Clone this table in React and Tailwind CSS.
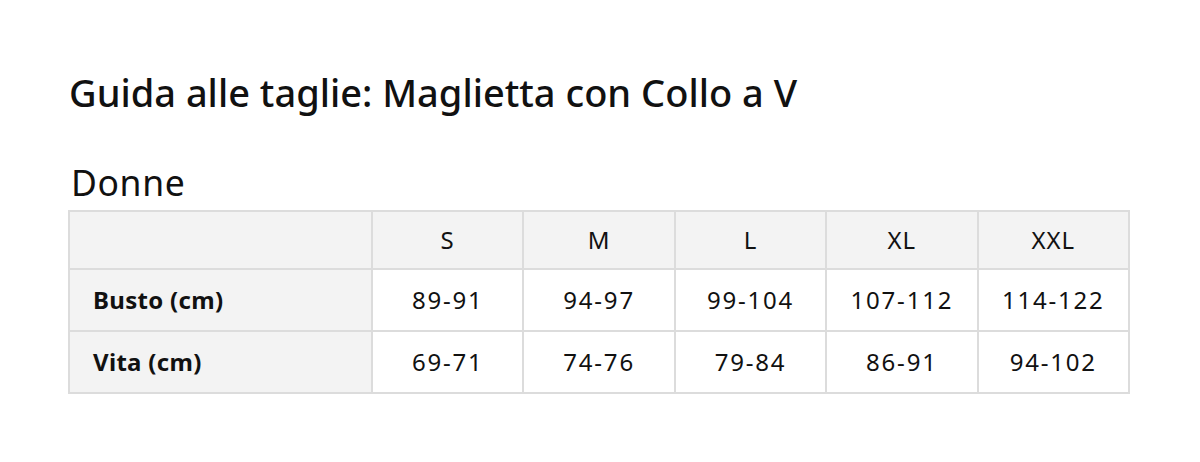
import React from "react";

const sizes = ["S", "M", "L", "XL", "XXL"];

const rows = [
  { label: "Busto (cm)", values: ["89-91", "94-97", "99-104", "107-112", "114-122"] },
  { label: "Vita (cm)", values: ["69-71", "74-76", "79-84", "86-91", "94-102"] },
];

export default function App() {
  return (
    <div
      className="w-[1200px] h-[462px] bg-white text-[#111] pl-[68px] pt-[66px]"
      style={{ fontFamily: '"Noto Sans", "Open Sans", sans-serif' }}
    >
      <h1 className="text-[38px] font-medium leading-[52px] pl-[1px]">
        Guida alle taglie: Maglietta con Collo a V
      </h1>

      <h2 className="text-[35.5px] leading-[44px] mt-[42px] pl-[3px] tracking-[0.6px]">Donne</h2>

      <table className="table-fixed mt-[6px] w-[1062px] border-collapse border-2 border-[#dcdcdc] text-[24px]">
        <colgroup>
          <col className="w-[303px]" />
          <col />
          <col />
          <col />
          <col />
          <col />
        </colgroup>
        <thead>
          <tr className="h-[58px] bg-[#f3f3f3]">
            <th className="border-2 border-[#dcdcdc]"></th>
            {sizes.map((s) => (
              <th key={s} className="border-2 border-[#dcdcdc] font-normal text-center tracking-[1px]">
                {s}
              </th>
            ))}
          </tr>
        </thead>
        <tbody>
          {rows.map((row) => (
            <tr key={row.label} className="h-[62px]">
              <td className="border-2 border-[#dcdcdc] bg-[#f3f3f3] font-bold pl-[23px] tracking-[0.3px]">
                {row.label}
              </td>
              {row.values.map((v) => (
                <td key={v} className="border-2 border-[#dcdcdc] text-center tracking-[1.8px]">
                  {v}
                </td>
              ))}
            </tr>
          ))}
        </tbody>
      </table>
    </div>
  );
}
